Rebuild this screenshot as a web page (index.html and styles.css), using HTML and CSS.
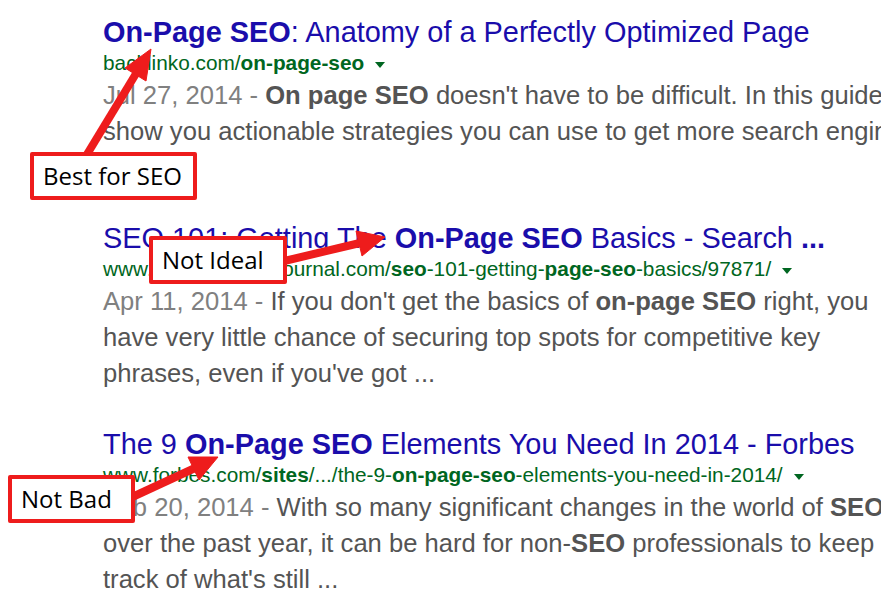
FILE: index.html
```html
<!DOCTYPE html>
<html>
<head>
	<meta charset="UTF-8">
	<title>On-Page SEO results</title>
	<link rel="stylesheet" href="styles.css">
</head>
<body>
	<div id="wrap">
		<div class="result">
			<h3 class="title"><b>On-Page SEO</b>: Anatomy of a Perfectly Optimized Page</h3>
			<div class="url">backlinko.com/<b>on-page-seo</b><i class="caret"></i></div>
			<div class="snippet"><span class="date">Jul 27, 2014 - </span><b>On page SEO</b> doesn't have to be difficult. In this guide I'll<br>show you actionable strategies you can use to get more search engine traffic</div>
		</div>
		<div class="result">
			<h3 class="title">SEO 101: Getting The <b>On-Page SEO</b> Basics - Search <b>...</b></h3>
			<div class="url">www.searchenginejournal.com/<b>seo</b>-101-getting-<b>page-seo</b>-basics/97871/<i class="caret"></i></div>
			<div class="snippet"><span class="date">Apr 11, 2014 - </span>If you don't get the basics of <b>on-page SEO</b> right, you<br>have very little chance of securing top spots for competitive key<br>phrases, even if you've got ...</div>
		</div>
		<div class="result">
			<h3 class="title">The 9 <b>On-Page SEO</b> Elements You Need In 2014 - Forbes</h3>
			<div class="url">www.forbes.com/<b>sites</b>/.../the-9-<b>on-page-seo</b>-elements-you-need-in-2014/<i class="caret"></i></div>
			<div class="snippet"><span class="date">Feb 20, 2014 - </span>With so many significant changes in the world of <b>SEO</b><br>over the past year, it can be hard for non-<b>SEO</b> professionals to keep<br>track of what's still ...</div>
		</div>
	</div>

	<!-- callout arrows drawn over the results -->
	<svg class="arrows" width="881" height="601" viewBox="0 0 881 601">
		<g fill="#ee1c1c" stroke="#ee1c1c">
			<line x1="86" y1="156" x2="137" y2="72" stroke-width="8"/>
			<polygon points="151,49 146,81 125,68" stroke-width="1"/>
			<line x1="280" y1="262" x2="360" y2="243" stroke-width="8"/>
			<polygon points="385,237 362,256 356,231" stroke-width="1"/>
			<line x1="128" y1="499" x2="195" y2="468" stroke-width="8"/>
			<polygon points="218,457 199,480 188,457" stroke-width="1"/>
		</g>
	</svg>

	<div class="tag tag-best">Best for SEO</div>
	<div class="tag tag-ideal">Not Ideal</div>
	<div class="tag tag-bad">Not Bad</div>
</body>
</html>
```

FILE: styles.css
```css
*{margin:0;padding:0;}
html,body{
	width:881px;
	height:601px;
	overflow:hidden;
	background:#fff;
}
body{
	font-family:Arial,"Liberation Sans",sans-serif;
	position:relative;
}
#wrap{
	padding:16px 0 0 103px;
}
.result{
	height:206px;
	white-space:nowrap;
}
.title{
	font-size:28.9px;
	line-height:32px;
	font-weight:normal;
	color:#1a0dab;
}
.url{
	font-size:20.8px;
	line-height:29px;
	color:#006621;
}
.caret{
	display:inline-block;
	width:0;
	height:0;
	margin-left:11px;
	vertical-align:middle;
	border-left:5px solid transparent;
	border-right:5px solid transparent;
	border-top:6px solid #006621;
}
.snippet{
	font-size:25.6px;
	line-height:36px;
	color:#545454;
}
.date{
	color:#808080;
}
.arrows{
	position:absolute;
	left:0;
	top:0;
}
.tag{
	position:absolute;
	box-sizing:border-box;
	height:48px;
	padding-left:9px;
	border:4px solid #ee1c1c;
	border-radius:2px;
	background:#fff;
	font-family:"Open Sans","Noto Sans",sans-serif;
	font-size:24px;
	line-height:39px;
	color:#000;
}
.tag-best{
	left:30px;
	top:152px;
	width:167px;
}
.tag-ideal{
	left:149px;
	top:236px;
	width:138px;
}
.tag-bad{
	left:8px;
	top:475px;
	width:127px;
}
```
